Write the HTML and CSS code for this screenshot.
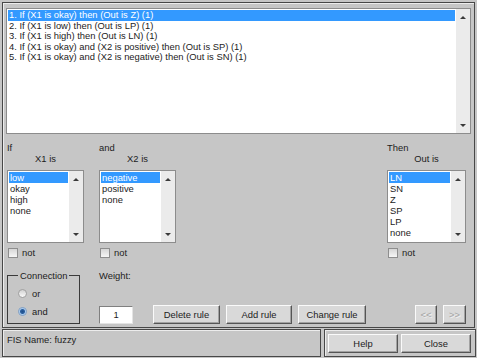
FILE: index.html
```html
<!DOCTYPE html>
<html lang="en">
	<head>
		<meta charset="UTF-8" />
		<meta name="viewport" content="width=device-width, initial-scale=1.0" />
		<title>Rule Editor</title>
		<link rel="stylesheet" href="styles.css">
	</head>
	<body>
		<div class="editor">
			<div class="main-frame">
				<div class="listbox rules">
					<ul class="items">
						<li class="selected">1. If (X1 is okay) then (Out is Z) (1)</li>
						<li>2. If (X1 is low) then (Out is LP) (1)</li>
						<li>3. If (X1 is high) then (Out is LN) (1)</li>
						<li>4. If (X1 is okay) and (X2 is positive) then (Out is SP) (1)</li>
						<li>5. If (X1 is okay) and (X2 is negative) then (Out is SN) (1)</li>
					</ul>
					<div class="scrollbar"><span class="arrow up"></span><span class="arrow down"></span></div>
				</div>

				<div class="vars">
					<div class="var">
						<div class="caption">If</div>
						<div class="var-name">X1 is</div>
						<div class="listbox">
							<ul class="items">
								<li class="selected">low</li>
								<li>okay</li>
								<li>high</li>
								<li>none</li>
							</ul>
							<div class="scrollbar"><span class="arrow up"></span><span class="arrow down"></span></div>
						</div>
						<div class="check"><span class="box"></span>not</div>
					</div>
					<div class="var">
						<div class="caption">and</div>
						<div class="var-name">X2 is</div>
						<div class="listbox">
							<ul class="items">
								<li class="selected">negative</li>
								<li>positive</li>
								<li>none</li>
							</ul>
							<div class="scrollbar"><span class="arrow up"></span><span class="arrow down"></span></div>
						</div>
						<div class="check"><span class="box"></span>not</div>
					</div>
					<div class="var output">
						<div class="caption">Then</div>
						<div class="var-name">Out is</div>
						<div class="listbox">
							<ul class="items">
								<li class="selected">LN</li>
								<li>SN</li>
								<li>Z</li>
								<li>SP</li>
								<li>LP</li>
								<li>none</li>
							</ul>
							<div class="scrollbar"><span class="arrow up"></span><span class="arrow down"></span></div>
						</div>
						<div class="check"><span class="box"></span>not</div>
					</div>
				</div>

				<div class="controls">
					<fieldset class="connection">
						<legend>Connection</legend>
						<div class="radio"><span class="dot"></span>or</div>
						<div class="radio on"><span class="dot"></span>and</div>
					</fieldset>
					<div class="weight">
						<div class="label">Weight:</div>
						<div class="field">1</div>
					</div>
					<div class="rule-buttons">
						<button class="btn delete">Delete rule</button>
						<button class="btn add">Add rule</button>
						<button class="btn change">Change rule</button>
					</div>
					<div class="nav">
						<button class="btn prev" disabled>&lt;&lt;</button>
						<button class="btn next" disabled>&gt;&gt;</button>
					</div>
				</div>
			</div>

			<div class="status">
				<div class="panel fis-name">FIS Name: fuzzy</div>
				<div class="panel actions">
					<button class="btn">Help</button>
					<button class="btn">Close</button>
				</div>
			</div>
		</div>
	</body>
</html>
```

FILE: styles.css
```css
* {
	margin: 0;
	padding: 0;
	box-sizing: border-box;
}

body {
	width: 477px;
	height: 358px;
	overflow: hidden;
	background-color: #c6c6c6;
	font: 9.4px 'Liberation Sans', Arial, sans-serif;
	color: #1c1c1c;
}

.editor {
	padding: 2px 0 0 2px;
}

.main-frame {
	width: 473px;
	height: 326px;
	border: 1px solid #474747;
	box-shadow: inset 1px 1px 0 #ececec;
	padding: 5px 3px 3px;
	display: flex;
	flex-direction: column;
}

/* list boxes */
.listbox {
	display: flex;
	background-color: #fff;
	border: 1px solid #8c8c8c;
}
.listbox .items {
	flex: 1;
	list-style: none;
	padding: 1px;
	white-space: nowrap;
	overflow: hidden;
}
.listbox li {
	height: 10.6px;
	line-height: 10.6px;
	padding-left: 1px;
}
.listbox li.selected {
	background-color: #3399ff;
	color: #fff;
}
.rules {
	height: 126px;
}
.scrollbar {
	width: 14px;
	background-color: #ebebeb;
	display: flex;
	flex-direction: column;
	justify-content: space-between;
	align-items: center;
	padding: 7px 0 6px;
}
.arrow {
	width: 0;
	height: 0;
	border-left: 3px solid transparent;
	border-right: 3px solid transparent;
}
.arrow.up {
	border-bottom: 3px solid #3a3a3a;
}
.arrow.down {
	border-top: 3px solid #3a3a3a;
}

/* input / output columns */
.vars {
	display: flex;
	margin-top: 8px;
	padding-left: 1px;
}
.var {
	width: 77px;
}
.var + .var {
	margin-left: 15px;
}
.var.output {
	width: 79px;
	margin-left: auto;
	margin-right: 5px;
}
.caption,
.var-name {
	height: 11px;
	line-height: 11px;
}
.var-name {
	text-align: center;
}
.var .listbox {
	height: 73px;
	margin-top: 6px;
}
.var li {
	height: 11px;
	line-height: 11px;
}
.check {
	display: flex;
	align-items: center;
	gap: 4px;
	height: 11px;
	margin-top: 4px;
	padding-left: 1px;
}
.box {
	width: 10px;
	height: 10px;
	border: 1px solid #8e8e8e;
	background: linear-gradient(#d6d6d6, #f6f6f6);
}

/* bottom controls */
.controls {
	margin-top: auto;
	display: flex;
	align-items: flex-end;
	padding-left: 1px;
}
.connection {
	width: 73px;
	border: 1px solid #3a3a3a;
	padding: 7px 0 6px 10px;
}
.connection legend {
	padding: 0 2px;
	line-height: 11px;
}
.radio {
	display: flex;
	align-items: center;
	gap: 5px;
	height: 11px;
}
.radio + .radio {
	margin-top: 7px;
}
.dot {
	width: 9px;
	height: 9px;
	border-radius: 50%;
	border: 1px solid #a0a0a0;
	background: linear-gradient(#d2d2d2, #fafafa);
}
.radio.on .dot {
	border-color: #7a9cc4;
	background: radial-gradient(circle, #1f4f8c 0, #2c5f9e 2px, #a9cbee 3px, #e8f1fb 4px);
}

.weight {
	align-self: stretch;
	display: flex;
	flex-direction: column;
	justify-content: space-between;
	margin-left: 19px;
}
.weight .label {
	line-height: 11px;
}
.field {
	width: 34px;
	height: 18px;
	background-color: #fff;
	border: 1px solid;
	border-color: #808080 #e4e4e4 #e4e4e4 #808080;
	text-align: center;
	line-height: 16px;
}

.btn {
	font: inherit;
	color: inherit;
	height: 19px;
	background-color: #d9d9d9;
	border: 1px solid;
	border-color: #fafafa #555 #555 #fafafa;
	box-shadow: inset -1px -1px 0 #a2a2a2;
}
.btn:disabled {
	color: #a4a4a4;
	text-shadow: 1px 1px 0 #f2f2f2;
}

.rule-buttons {
	display: flex;
	gap: 6px;
	margin-left: 20px;
}
.delete {
	width: 67px;
}
.add {
	width: 66px;
}
.change {
	width: 68px;
}

.nav {
	display: flex;
	gap: 6px;
	margin-left: auto;
	margin-right: 5px;
}
.prev {
	width: 22px;
}
.next {
	width: 23px;
}

/* status row */
.status {
	display: flex;
	gap: 3px;
	margin-top: 1px;
	height: 28px;
}
.panel {
	border: 1px solid #474747;
	box-shadow: inset 1px 1px 0 #ececec;
}
.fis-name {
	width: 319px;
	padding: 4px 0 0 4px;
	line-height: 11px;
}
.actions {
	width: 152px;
	display: flex;
	gap: 3px;
	padding: 4px 0 0 3px;
}
.actions .btn {
	width: 70px;
}
```
